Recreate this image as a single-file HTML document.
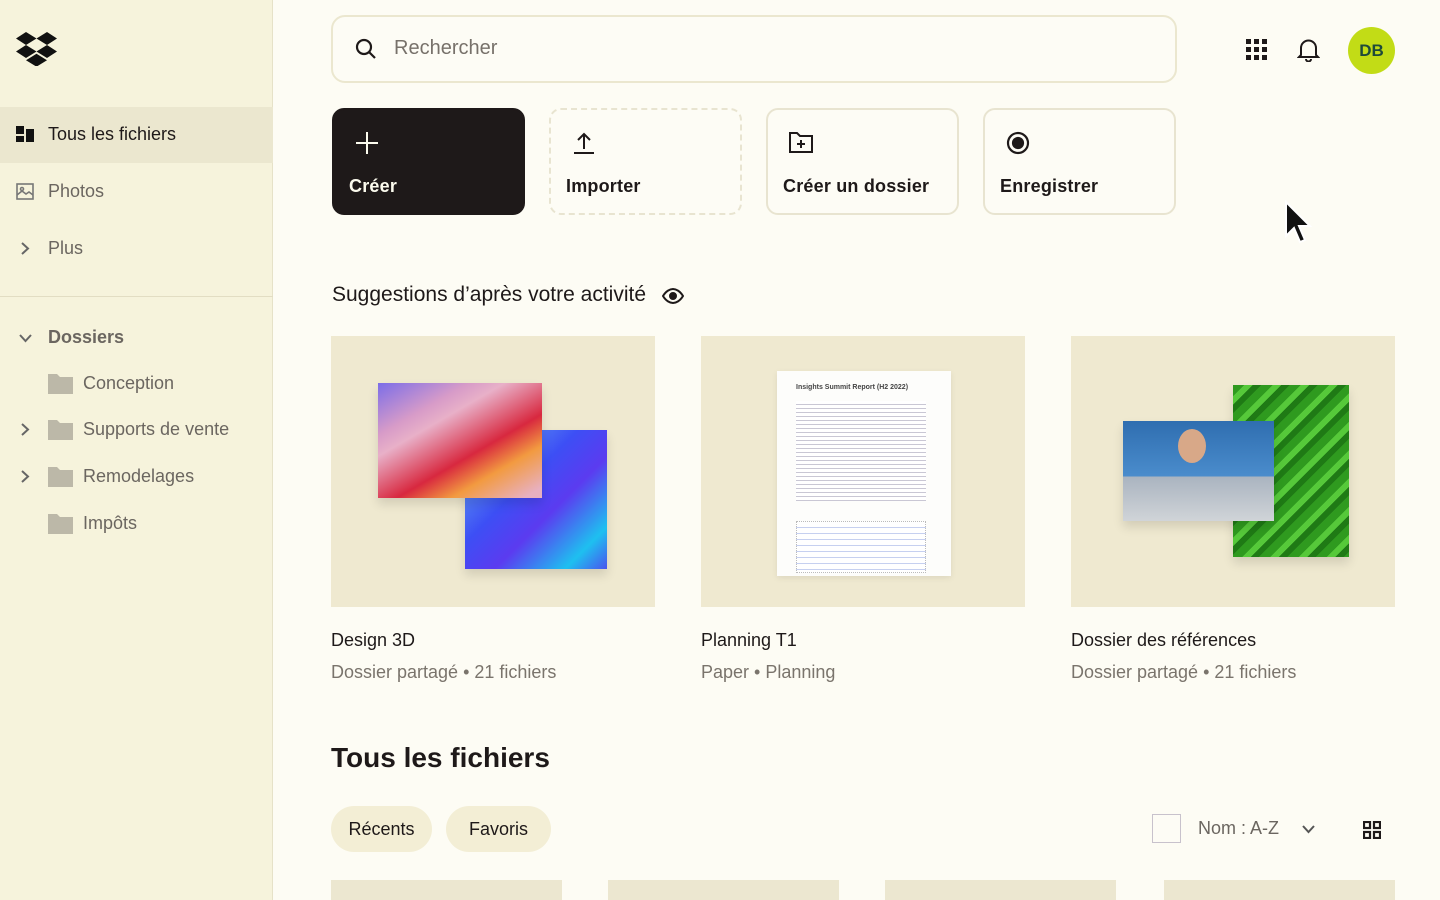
<!DOCTYPE html>
<html><head><meta charset="utf-8"><style>
*{margin:0;padding:0;box-sizing:border-box}
body{width:1440px;height:900px;overflow:hidden;background:#fdfcf4;font-family:"Liberation Sans",sans-serif;color:#1e1919;position:relative}
.a{position:absolute}
#side{left:0;top:0;width:273px;height:900px;background:#f6f3dc;border-right:1px solid #e6e2c8}
.nav{position:absolute;left:48px;font-size:18px;color:#6b6660}
.btn{position:absolute;top:108px;width:193px;height:107px;border-radius:12px;border:2px solid #e8e4d0;background:#fdfcf5}
.btn span{position:absolute;left:15px;top:66px;font-size:18px;font-weight:bold;letter-spacing:.2px}
.btn svg{position:absolute;left:20px;top:20px}
.thumb{position:absolute;top:336px;width:324px;height:271px;background:#efe9d0}
.t1{position:absolute;top:630px;font-size:18px}
.t2{position:absolute;top:662px;font-size:18px;color:#7a746c}
.chip{position:absolute;top:806px;height:46px;border-radius:23px;background:#f3eed5;font-size:18px;line-height:46px;text-align:center}
.tile{position:absolute;top:880px;height:20px;width:231px;background:#ece7d0}
</style></head><body>
<div id="side" class="a">
<svg class="a" style="left:16px;top:32px" width="41" height="34" viewBox="0 0 41 34"><path d="M10 0L0 6.5 10 13 20.5 6.5zM31 0L20.5 6.5 31 13 41 6.5zM0 19.5L10 26 20.5 19.5 10 13zM31 13L20.5 19.5 31 26 41 19.5zM10 28.2L20.5 34.7 31 28.2 20.5 21.7z" fill="#111"/></svg>
<div class="a" style="left:0;top:107px;width:273px;height:56px;background:#ebe7cf"></div>
<svg class="a" style="left:16px;top:126px" width="20" height="16"><rect x="0" y="0" width="8" height="8" fill="#111"/><rect x="0" y="10" width="8" height="6" fill="#111"/><rect x="10" y="3" width="8" height="13" fill="#111"/></svg>
<div class="nav" style="top:124px;color:#1e1919">Tous les fichiers</div>
<svg class="a" style="left:16px;top:183px" width="18" height="17" fill="none" stroke="#777" stroke-width="1.6"><rect x="1" y="1" width="16" height="15"/><path d="M1 12l5-4 4 3 3-2 4 3"/><circle cx="6" cy="6" r="1.5"/></svg>
<div class="nav" style="top:181px">Photos</div>
<svg class="a" style="left:20px;top:241px" width="10" height="15" fill="none" stroke="#666" stroke-width="2"><path d="M2 2l6 5.5L2 13"/></svg>
<div class="nav" style="top:238px">Plus</div>
<div class="a" style="left:0;top:296px;width:273px;height:1px;background:#e2ddc3"></div>
<svg class="a" style="left:18px;top:333px" width="15" height="10" fill="none" stroke="#666" stroke-width="2"><path d="M2 2l5.5 6L13 2"/></svg>
<div class="nav" style="top:327px;font-weight:bold;color:#6b6660">Dossiers</div>
<svg class="a" style="left:20px;top:422px" width="10" height="15" fill="none" stroke="#666" stroke-width="2"><path d="M2 2l6 5.5L2 13"/></svg>
<svg class="a" style="left:20px;top:469px" width="10" height="15" fill="none" stroke="#666" stroke-width="2"><path d="M2 2l6 5.5L2 13"/></svg>
<svg class="a" style="left:48px;top:374px" width="25" height="20"><path d="M0 0h9l3 3h13v17H0z" fill="#bcb8a8"/></svg>
<svg class="a" style="left:48px;top:420px" width="25" height="20"><path d="M0 0h9l3 3h13v17H0z" fill="#bcb8a8"/></svg>
<svg class="a" style="left:48px;top:467px" width="25" height="20"><path d="M0 0h9l3 3h13v17H0z" fill="#bcb8a8"/></svg>
<svg class="a" style="left:48px;top:514px" width="25" height="20"><path d="M0 0h9l3 3h13v17H0z" fill="#bcb8a8"/></svg>
<div class="nav" style="left:83px;top:373px">Conception</div>
<div class="nav" style="left:83px;top:419px">Supports de vente</div>
<div class="nav" style="left:83px;top:466px">Remodelages</div>
<div class="nav" style="left:83px;top:513px">Impôts</div>
</div>

<div class="a" style="left:331px;top:15px;width:846px;height:68px;border:2px solid #ebe7cf;border-radius:14px;background:#fdfcf5"></div>
<svg class="a" style="left:355px;top:38px" width="22" height="22" fill="none" stroke="#1e1919" stroke-width="2.2"><circle cx="9" cy="9" r="7"/><path d="M14 14l6 6"/></svg>
<div class="a" style="left:394px;top:37px;font-size:20px;color:#77716a">Rechercher</div>
<svg class="a" style="left:1246px;top:39px" width="22" height="22" fill="#1e1919"><rect x="0" y="0" width="5" height="5"/><rect x="8" y="0" width="5" height="5"/><rect x="16" y="0" width="5" height="5"/><rect x="0" y="8" width="5" height="5"/><rect x="8" y="8" width="5" height="5"/><rect x="16" y="8" width="5" height="5"/><rect x="0" y="16" width="5" height="5"/><rect x="8" y="16" width="5" height="5"/><rect x="16" y="16" width="5" height="5"/></svg>
<svg class="a" style="left:1297px;top:38px" width="23" height="24" fill="none" stroke="#1e1919" stroke-width="2"><path d="M4 17V10a7.5 7.5 0 0115 0v7l2 2H2z"/><path d="M9 21a2.5 2.5 0 005 0"/></svg>
<div class="a" style="left:1348px;top:27px;width:47px;height:47px;border-radius:50%;background:#c2dc16;color:#1e4a3a;font-weight:bold;font-size:17px;line-height:47px;text-align:center">DB</div>

<div class="btn" style="left:332px;background:#1e1919;border-color:#1e1919;color:#fcfbee"><svg width="26" height="26" stroke="#fcfbee" stroke-width="2"><path d="M13 2v22M2 13h22"/></svg><span>Créer</span></div>
<div class="btn" style="left:549px;border-style:dashed"><svg width="26" height="26" fill="none" stroke="#1e1919" stroke-width="2"><path d="M13 19V4M7 10l6-6 6 6M3 23h20"/></svg><span>Importer</span></div>
<div class="btn" style="left:766px"><svg width="26" height="26" fill="none" stroke="#1e1919" stroke-width="2"><path d="M2 3h7l3 3h12v16H2z"/><path d="M13 10v8M9 14h8"/></svg><span>Créer un dossier</span></div>
<div class="btn" style="left:983px"><svg width="26" height="26" fill="none" stroke="#1e1919" stroke-width="2.2"><circle cx="13" cy="13" r="10"/><circle cx="13" cy="13" r="5" fill="#1e1919"/></svg><span>Enregistrer</span></div>

<svg class="a" style="left:1284px;top:200px" width="32" height="50"><path d="M2 2v34l8-8 6 14 5-2-6-14h11z" fill="#111" stroke="#fff" stroke-width="2"/></svg>

<div class="a" style="left:332px;top:283px;font-size:21px">Suggestions d’après votre activité</div>
<svg class="a" style="left:662px;top:287px" width="22" height="18" fill="none" stroke="#1e1919" stroke-width="2"><path d="M1 9c3-5 7-7 10-7s7 2 10 7c-3 5-7 7-10 7S4 14 1 9z"/><circle cx="11" cy="9" r="3" fill="#1e1919"/></svg>

<div class="thumb" style="left:331px">
<div class="a" style="left:134px;top:94px;width:142px;height:139px;background:linear-gradient(135deg,#6fc0f0,#3d4ff5 40%,#5b3bf0 60%,#1ec0f0 85%,#4a54ee);box-shadow:0 6px 10px rgba(0,0,0,.12)"></div>
<div class="a" style="left:47px;top:47px;width:164px;height:115px;background:linear-gradient(150deg,#7b6de8 0%,#d79bc8 25%,#e8b0c8 35%,#d8283f 60%,#f29a40 75%,#e8b0c0 95%);box-shadow:0 6px 10px rgba(0,0,0,.12)"></div>
</div>
<div class="thumb" style="left:701px">
<div class="a" style="left:76px;top:35px;width:174px;height:205px;background:#fdfdfb;box-shadow:0 2px 6px rgba(0,0,0,.08)">
<div style="position:absolute;left:19px;top:13px;font-size:7px;font-weight:bold;color:#444">Insights Summit Report (H2 2022)</div>
<div style="position:absolute;left:19px;top:30px;width:130px;height:100px;background:repeating-linear-gradient(#fff 0 3px,#c9c7d4 3px 4px)"></div>
<div style="position:absolute;left:19px;top:150px;width:130px;height:52px;border:1px dotted #bbb;background:repeating-linear-gradient(#fff 0 5px,#c6d0f0 5px 6px)"></div>
</div></div>
<div class="thumb" style="left:1071px">
<div class="a" style="left:162px;top:49px;width:116px;height:172px;background:repeating-linear-gradient(135deg,#2f9a1f 0 8px,#56c93a 8px 14px,#1f7a15 14px 20px);box-shadow:0 6px 10px rgba(0,0,0,.12)"></div>
<div class="a" style="left:52px;top:85px;width:151px;height:100px;background:linear-gradient(180deg,#2f6eb0,#4a8ccc 55%,#aab4c0 56%,#d0d4d8);box-shadow:0 6px 10px rgba(0,0,0,.12)"><div style="position:absolute;left:55px;top:8px;width:28px;height:34px;border-radius:50%;background:#d8a888"></div></div>
</div>
<div class="t1" style="left:331px">Design 3D</div><div class="t2" style="left:331px">Dossier partagé • 21 fichiers</div>
<div class="t1" style="left:701px">Planning T1</div><div class="t2" style="left:701px">Paper • Planning</div>
<div class="t1" style="left:1071px">Dossier des références</div><div class="t2" style="left:1071px">Dossier partagé • 21 fichiers</div>

<div class="a" style="left:331px;top:742px;font-size:28px;font-weight:bold">Tous les fichiers</div>
<div class="chip" style="left:331px;width:101px">Récents</div>
<div class="chip" style="left:446px;width:105px">Favoris</div>
<div class="a" style="left:1152px;top:814px;width:29px;height:29px;border:1.5px solid #c8c2cc;background:#fdfcf5"></div>
<div class="a" style="left:1198px;top:818px;font-size:18px;color:#6b6660">Nom : A-Z</div>
<svg class="a" style="left:1301px;top:824px" width="15" height="10" fill="none" stroke="#555" stroke-width="2"><path d="M2 2l5.5 6L13 2"/></svg>
<svg class="a" style="left:1363px;top:821px" width="18" height="18" fill="none" stroke="#1e1919" stroke-width="2.2"><rect x="1" y="1" width="6" height="6"/><rect x="11" y="1" width="6" height="6"/><rect x="1" y="11" width="6" height="6"/><rect x="11" y="11" width="6" height="6"/></svg>
<div class="tile" style="left:331px"></div><div class="tile" style="left:608px"></div><div class="tile" style="left:885px"></div><div class="tile" style="left:1164px"></div>
</body></html>
